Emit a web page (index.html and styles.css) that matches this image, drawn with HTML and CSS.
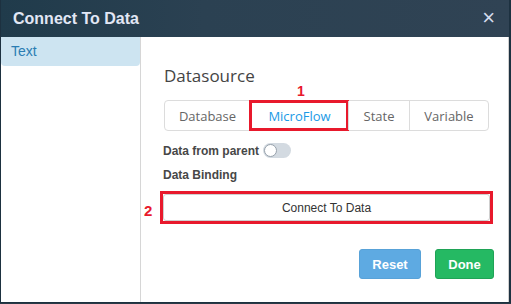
FILE: index.html
```html
<!DOCTYPE html>
<html lang="en">
<head>
    <meta charset="UTF-8">
    <meta name="viewport" content="width=device-width, initial-scale=1.0">
    <title>Connect To Data</title>
    <link rel="stylesheet" href="styles.css">
</head>
<body>
    <div class="modal">
        <div class="modal-header">
            <span class="modal-title">Connect To Data</span>
            <span class="close-btn">&times;</span>
        </div>

        <div class="modal-body">
            <div class="sidebar">
                <div class="side-item active">Text</div>
            </div>

            <div class="content">
                <div class="section-title">Datasource</div>

                <div class="tabs">
                    <div class="tab">Database</div>
                    <div class="tab active">
                        MicroFlow
                        <span class="marker marker-one">1</span>
                    </div>
                    <div class="tab">State</div>
                    <div class="tab">Variable</div>
                </div>

                <div class="field-row">
                    <span class="field-label">Data from parent</span>
                    <span class="toggle"><span class="toggle-knob"></span></span>
                </div>

                <div class="field-label binding-label">Data Binding</div>

                <div class="binding-wrap">
                    <span class="marker marker-two">2</span>
                    <button class="binding-btn">Connect To Data</button>
                </div>

                <div class="footer">
                    <button class="action-btn reset-btn">Reset</button>
                    <button class="action-btn done-btn">Done</button>
                </div>
            </div>
        </div>
    </div>
</body>
</html>
```

FILE: styles.css
```css
body {
    margin: 0;
    padding: 0;
    background-color: #2a3a46;
    font-family: 'Liberation Sans', Arial, sans-serif;
    height: 304px;
    overflow: hidden;
}

.modal {
    width: 508px;
    height: 302px;
    background-color: #fff;
    border-left: 1px solid #1d3140;
    border-right: 2px solid #1d3140;
    border-bottom: 1px solid #1d3140;
    display: flex;
    flex-direction: column;
}

.modal-header {
    height: 37px;
    flex-shrink: 0;
    display: flex;
    align-items: center;
    justify-content: space-between;
    padding: 0 14px 0 12px;
    background: linear-gradient(90deg, #203b4b 0%, #2b4152 40%, #304354 100%);
}

.modal-title {
    font-size: 16px;
    font-weight: bold;
    color: #e2e7f5;
}

.close-btn {
    font-size: 22px;
    line-height: 1;
    color: #d3dbec;
    margin-top: -1px;
}

.modal-body {
    flex: 1;
    display: flex;
}

.sidebar {
    width: 139px;
    flex-shrink: 0;
    border-right: 1px solid #d6d6d6;
}

.side-item {
    height: 29px;
    line-height: 28px;
    padding-left: 10px;
    font-size: 14px;
    color: #2a7db3;
}

.side-item.active {
    background-color: #cde4f1;
    border-radius: 0 0 4px 4px;
}

.content {
    flex: 1;
    min-width: 0;
    display: flex;
    flex-direction: column;
    align-items: flex-start;
    padding: 27px 17px 0 23px;
    border-right: 1px solid #d0d0d0;
}

.section-title {
    font-family: 'Open Sans', sans-serif;
    font-size: 17px;
    line-height: 23px;
    color: #444;
}

.tabs {
    display: flex;
    margin-top: 13px;
    height: 31px;
    border: 1px solid #dcdcdc;
    border-radius: 4px;
    box-sizing: border-box;
}

.tab {
    position: relative;
    box-sizing: border-box;
    display: flex;
    align-items: center;
    justify-content: center;
    font-family: 'Open Sans', sans-serif;
    font-size: 13px;
    color: #666;
    border-left: 1px solid #dcdcdc;
}

.tab:nth-child(1) { width: 85px; border-left: none; }
.tab:nth-child(2) { width: 98px; }
.tab:nth-child(3) { width: 61px; }
.tab:nth-child(4) { width: 79px; }

.tab.active {
    color: #1a9ae6;
    border-left: 1px solid #1890ff;
    outline: 3px solid #e8192c;
    outline-offset: -2px;
}

.marker {
    position: absolute;
    font-size: 14px;
    font-weight: bold;
    color: #e8192c;
    font-family: 'Liberation Sans', Arial, sans-serif;
}

.marker-one {
    top: -18px;
    left: 46px;
}

.field-row {
    display: flex;
    align-items: center;
    margin-top: 12px;
    margin-left: -1px;
}

.field-label {
    font-size: 12px;
    font-weight: bold;
    color: #474747;
}

.toggle {
    width: 28px;
    height: 15px;
    margin-left: 4px;
    border-radius: 8px;
    background-color: #d3dae1;
    display: flex;
    align-items: center;
}

.toggle-knob {
    width: 13px;
    height: 13px;
    border-radius: 50%;
    background-color: #fff;
    border: 1px solid #97a1ab;
    box-sizing: border-box;
    margin-left: 1px;
}

.binding-label {
    margin-top: 10px;
    margin-left: -1px;
}

.binding-wrap {
    position: relative;
    align-self: stretch;
    margin: 9px -2px 0 -4px;
    border: 3px solid #e8192c;
}

.marker-two {
    top: 8px;
    left: -19px;
    font-size: 15px;
}

.binding-btn {
    display: block;
    width: 100%;
    height: 27px;
    background-color: #fff;
    border: 1px solid #cfcfcf;
    border-radius: 3px;
    font-family: 'Liberation Sans', Arial, sans-serif;
    font-size: 12px;
    color: #333;
}

.footer {
    align-self: stretch;
    display: flex;
    justify-content: flex-end;
    gap: 14px;
    margin-top: 25px;
    margin-right: -3px;
}

.action-btn {
    height: 30px;
    border-radius: 3px;
    font-family: 'Liberation Sans', Arial, sans-serif;
    font-size: 13px;
    font-weight: bold;
    color: #fff;
    cursor: pointer;
}

.reset-btn {
    width: 62px;
    background-color: #5eaae2;
    border: 1px solid #58a2d8;
}

.done-btn {
    width: 59px;
    background-color: #25b963;
    border: 1px solid #1fa356;
}
```
